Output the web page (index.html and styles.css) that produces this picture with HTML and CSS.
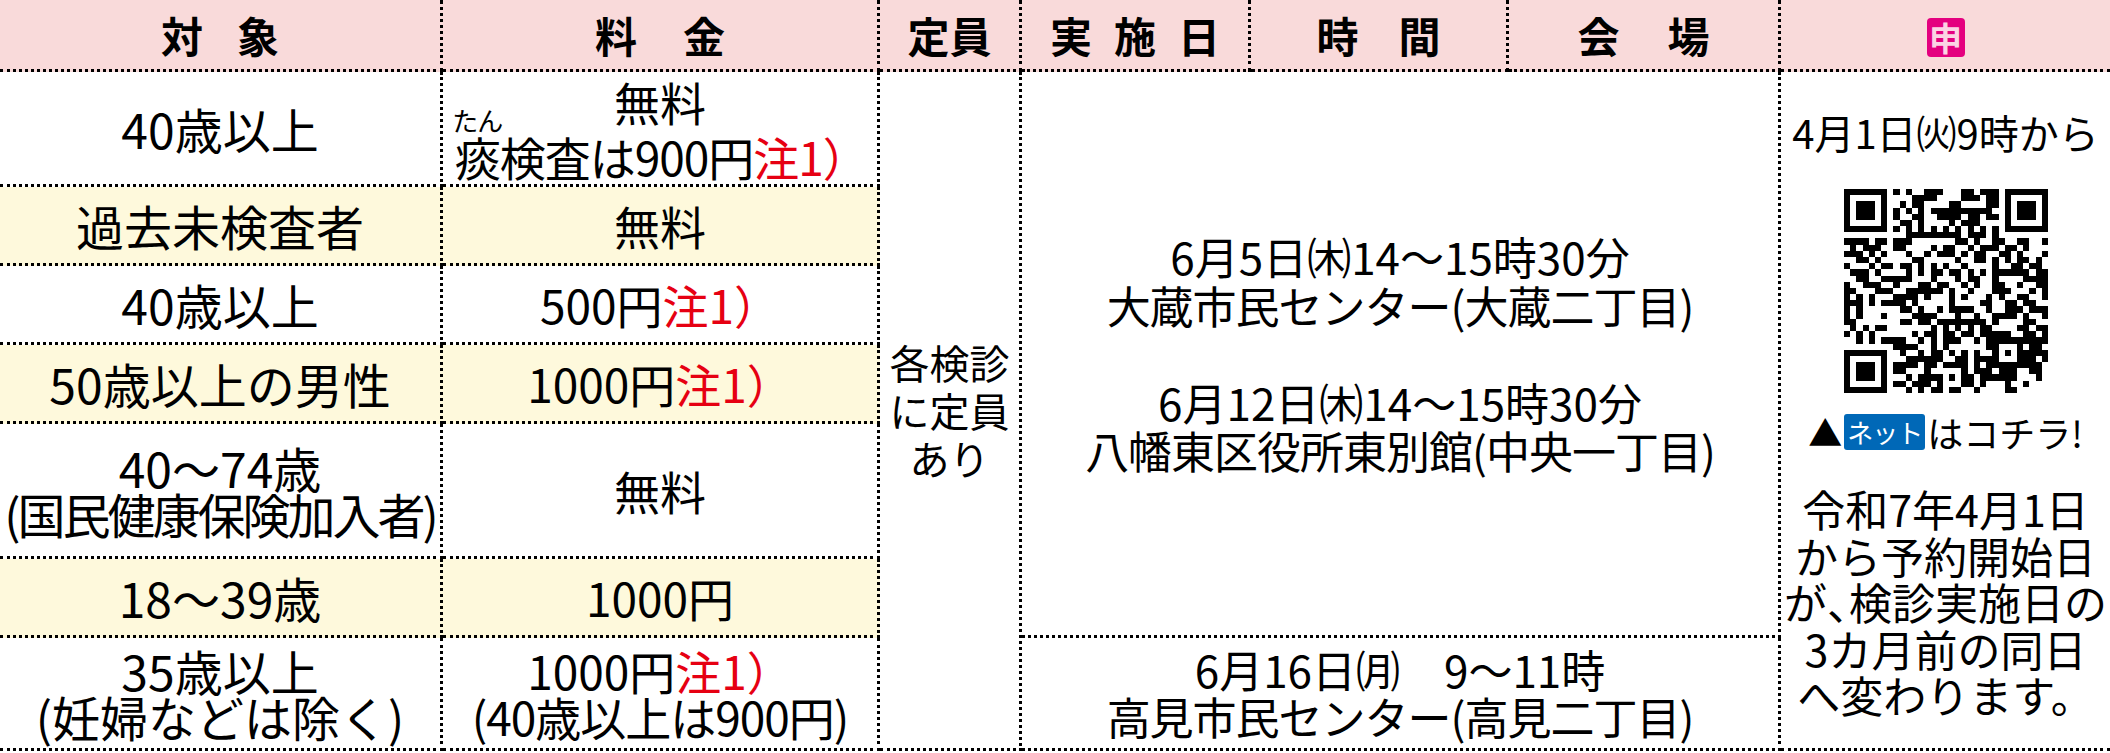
FILE: index.html
```html
<!DOCTYPE html>
<html lang="ja">
<head>
<meta charset="utf-8">
<title>検診日程</title>
<link rel="stylesheet" href="styles.css">
</head>
<body>
<div class="table">
  <div class="cell hd"><span class="ht sp-taisho">対象</span></div>
  <div class="cell hd"><span class="ht sp-ryokin">料金</span></div>
  <div class="cell hd"><span class="ht">定員</span></div>
  <div class="cell hd"><span class="ht sp-jisshi">実施日</span></div>
  <div class="cell hd"><span class="ht sp-jikan">時間</span></div>
  <div class="cell hd"><span class="ht sp-kaijo">会場</span></div>
  <div class="cell hd last"><span class="mosi">申</span></div>

  <div class="cell teiin"><p>各検診</p><p>に定員</p><p>あり</p></div>
  <div class="cell sched">
    <div class="blk"><p>6月5日㈭14〜15時30分</p><p class="narrow">大蔵市民センター(大蔵二丁目)</p></div>
    <div class="blk"><p>6月12日㈭14〜15時30分</p><p class="narrow">八幡東区役所東別館(中央一丁目)</p></div>
  </div>
  <div class="cell sched2"><p>6月16日㈪　9〜11時</p><p class="narrow">高見市民センター(高見二丁目)</p></div>
  <div class="cell apply last">
    <p class="a-date">4月1日㈫9時から</p>
    <svg class="qr" viewBox="0 0 33 33" width="204" height="204" shape-rendering="crispEdges"><path id="qr-path" d="" fill="#000"/></svg>
    <p class="net"><span class="tri">▲</span><span class="badge">ネット</span>はコチラ!</p>
    <p class="notice">令和7年4月1日<br>から予約開始日<br>が<span class="comma">、</span>検診実施日の<br>3カ月前の同日<br>へ変わります。</p>
  </div>

  <div class="cell t1"><p>40歳以上</p></div>
  <div class="cell t2 r1"><p class="free">無料</p><p class="tan"><ruby>痰<rt>たん</rt></ruby>検査は900円<span class="red">注1）</span></p></div>

  <div class="cell t1 alt"><p>過去未検査者</p></div>
  <div class="cell t2 alt"><p>無料</p></div>

  <div class="cell t1"><p>40歳以上</p></div>
  <div class="cell t2"><p>500円<span class="red">注1）</span></p></div>

  <div class="cell t1 alt"><p>50歳以上の男性</p></div>
  <div class="cell t2 alt"><p>1000円<span class="red">注1）</span></p></div>

  <div class="cell t1"><p>40〜74歳</p><p class="tight">(国民健康保険加入者)</p></div>
  <div class="cell t2"><p>無料</p></div>

  <div class="cell t1 alt"><p>18〜39歳</p></div>
  <div class="cell t2 alt"><p>1000円</p></div>

  <div class="cell t1"><p>35歳以上</p><p>(妊婦などは除く)</p></div>
  <div class="cell t2"><p>1000円<span class="red">注1）</span></p><p class="narrow">(40歳以上は900円)</p></div>
</div>
<script src="qr.js"></script>
</body>
</html>
```

FILE: styles.css
```css
* {
  box-sizing: border-box;
  margin: 0;
  padding: 0;
}

html,
body {
  background: #ffffff;
}

body {
  width: 2110px;
  height: 753px;
  overflow: hidden;
  font-family: "Noto Sans CJK JP", "Noto Sans", sans-serif;
  color: #000000;
}

.table {
  display: grid;
  grid-template-columns: 443px 437px 142px 229px 258px 272px 329px;
  grid-template-rows: 72px 115px 79px 79px 79px 135px 79px 113px;
}

.cell {
  display: flex;
  flex-direction: column;
  align-items: center;
  justify-content: center;
  text-align: center;
  white-space: nowrap;
  border-right: 3px dotted #000000;
  border-bottom: 3px dotted #000000;
}

.cell.last {
  border-right: none;
}

.hd {
  background: #f9dada;
}

.ht {
  display: inline-block;
  font-size: 42px;
  font-weight: 700;
  line-height: 1;
}

.sp-taisho {
  letter-spacing: 34px;
  margin-right: -34px;
}

.sp-ryokin {
  letter-spacing: 46px;
  margin-right: -46px;
}

.sp-jisshi {
  letter-spacing: 22px;
  margin-right: -22px;
}

.sp-jikan {
  letter-spacing: 40px;
  margin-right: -40px;
}

.sp-kaijo {
  letter-spacing: 48px;
  margin-right: -48px;
}

.mosi {
  display: flex;
  align-items: center;
  justify-content: center;
  width: 38px;
  height: 39px;
  margin-top: 6px;
  border-radius: 4px;
  background: #e4007f;
  color: #fbd3e4;
  font-size: 33px;
  font-weight: 700;
  line-height: 1;
}

.alt {
  background: #fef9dc;
}

.t1 {
  font-size: 48px;
  line-height: 46px;
}

.t2 {
  font-size: 46px;
  line-height: 46px;
}

.tight {
  letter-spacing: -3px;
}

.narrow {
  letter-spacing: -1px;
}

.r1 .free {
  margin-bottom: -16px;
}

.r1 .tan {
  letter-spacing: -1px;
}

rt {
  font-size: 26px;
  line-height: 1;
  letter-spacing: -1px;
}

.red {
  color: #e60012;
}

.teiin {
  grid-column: 3;
  grid-row: 2 / 9;
  font-size: 40px;
  line-height: 48px;
}

.sched {
  grid-column: 4 / 7;
  grid-row: 2 / 8;
  font-size: 44px;
  line-height: 48.5px;
}

.sched .blk + .blk {
  margin-top: 48.5px;
}

.sched2 {
  grid-column: 4 / 7;
  grid-row: 8;
  font-size: 44px;
  line-height: 47px;
}

.apply {
  grid-column: 7;
  grid-row: 2 / 9;
  justify-content: flex-start;
  padding-top: 37px;
  font-size: 40px;
  line-height: 46px;
}

.qr {
  display: block;
  margin-top: 34px;
}

.net {
  display: flex;
  align-items: center;
  margin-top: 16px;
  font-size: 36px;
  line-height: 46px;
}

.tri {
  font-size: 34px;
  margin-right: 2px;
}

.badge {
  display: inline-flex;
  align-items: center;
  height: 36px;
  padding: 0 3px;
  margin-right: 2px;
  border-radius: 3px;
  background: #0068b7;
  color: #ffffff;
  font-size: 26px;
  letter-spacing: -1px;
  line-height: 1;
}

.notice {
  margin-top: 30px;
  font-size: 43px;
  line-height: 46.5px;
}

.comma {
  letter-spacing: -21px;
}
```

FILE: qr.js
```js
(function () {
  var N = 33;
  var m = [];
  var x, y;
  for (y = 0; y < N; y++) {
    m.push([]);
    for (x = 0; x < N; x++) m[y].push(-1);
  }
  function finder(ox, oy) {
    for (var j = -1; j <= 7; j++) {
      for (var i = -1; i <= 7; i++) {
        var X = ox + i, Y = oy + j;
        if (X < 0 || Y < 0 || X >= N || Y >= N) continue;
        var v = 0;
        if (i >= 0 && i <= 6 && j >= 0 && j <= 6) {
          v = (i === 0 || i === 6 || j === 0 || j === 6 || (i >= 2 && i <= 4 && j >= 2 && j <= 4)) ? 1 : 0;
        }
        m[Y][X] = v;
      }
    }
  }
  finder(0, 0);
  finder(N - 7, 0);
  finder(0, N - 7);
  for (var k = 8; k < N - 8; k++) {
    m[6][k] = k % 2 === 0 ? 1 : 0;
    m[k][6] = k % 2 === 0 ? 1 : 0;
  }
  for (y = -2; y <= 2; y++) {
    for (x = -2; x <= 2; x++) {
      m[26 + y][26 + x] = Math.max(Math.abs(x), Math.abs(y)) !== 1 ? 1 : 0;
    }
  }
  var s = 20250401;
  function rnd() {
    s = (Math.imul(s, 1103515245) + 12345) >>> 0;
    return (s >>> 16) / 65536;
  }
  var d = '';
  for (y = 0; y < N; y++) {
    for (x = 0; x < N; x++) {
      if (m[y][x] === -1) m[y][x] = rnd() < 0.52 ? 1 : 0;
      if (m[y][x] === 1) d += 'M' + x + ' ' + y + 'h1v1h-1z';
    }
  }
  document.getElementById('qr-path').setAttribute('d', d);
})();
```
